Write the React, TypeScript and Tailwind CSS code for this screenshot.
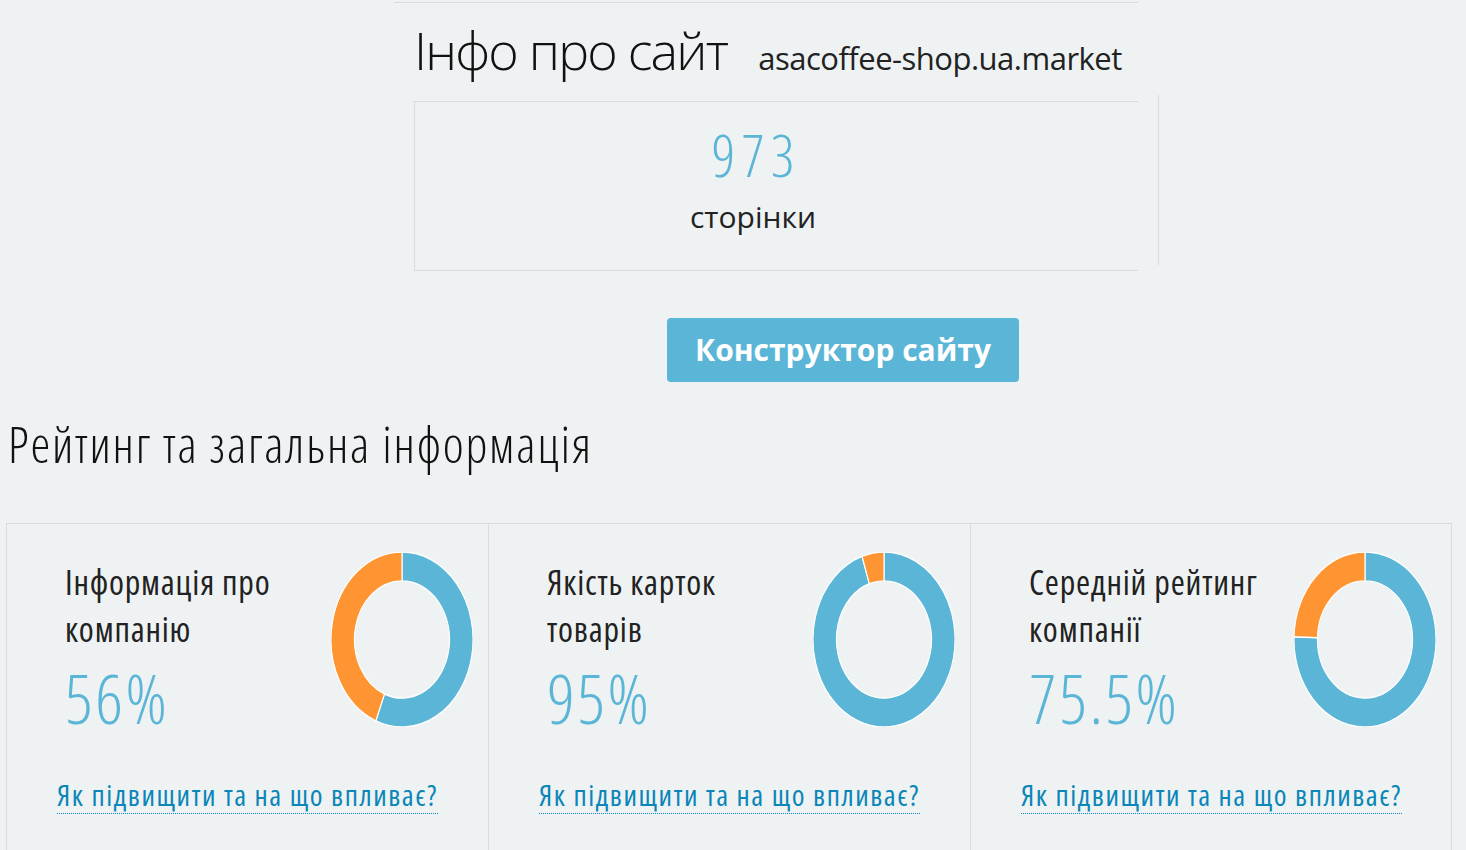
import React from "react";

const BLUE = "#5bb5d6";
const ORANGE = "#fe9532";

function arc(a0: number, a1: number, r0: number, r1: number) {
  // angles in degrees, 0 = 12 o'clock, clockwise
  const p = (a: number, r: number) => {
    const t = ((a - 90) * Math.PI) / 180;
    return `${50 + r * Math.cos(t)} ${50 + r * Math.sin(t)}`;
  };
  const large = a1 - a0 > 180 ? 1 : 0;
  return `M ${p(a0, r1)} A ${r1} ${r1} 0 ${large} 1 ${p(a1, r1)} L ${p(a1, r0)} A ${r0} ${r0} 0 ${large} 0 ${p(a0, r0)} Z`;
}

function Donut({ value }: { value: number }) {
  const end = (value / 100) * 360;
  return (
    <svg width="142" height="175" viewBox="0 0 100 100" preserveAspectRatio="none" className="shrink-0">
      <path d={arc(0, end, 33.5, 50)} fill={BLUE} stroke="#ffffff" strokeWidth="0.8" />
      <path d={arc(end, 360, 33.5, 50)} fill={ORANGE} stroke="#ffffff" strokeWidth="0.8" />
    </svg>
  );
}

const cards = [
  { title: ["Інформація про", "компанію"], value: "56%", pct: 56 },
  { title: ["Якість карток", "товарів"], value: "95%", pct: 95 },
  { title: ["Середній рейтинг", "компанії"], value: "75.5%", pct: 75.5 },
];

function RatingCard({ title, value, pct, last }: { title: string[]; value: string; pct: number; last?: boolean }) {
  return (
    <div className={`w-[482px] h-[340px] border-t border-l border-[#d8dcde] ${last ? "border-r" : ""} pt-[28px] pl-[50px] pr-[15px]`}>
      <div className="flex justify-between">
        <div className="pl-[8px] pt-[7px]">
          <div className="text-[34px] leading-[47px] tracking-[0.8px] text-[#222] font-stretch-condensed whitespace-nowrap">
            {title[0]}
            <br />
            {title[1]}
          </div>
          <div className="text-[68px] leading-[70px] tracking-[2.5px] font-light text-[#5bb5d6] mt-[10px] font-stretch-condensed">
            {value}
          </div>
        </div>
        <Donut value={pct} />
      </div>
      <a className="inline-block mt-[44px] text-[29px] leading-[36px] tracking-[1.55px] whitespace-nowrap text-[#0a86b8] font-stretch-condensed border-b border-dotted border-[#0a86b8]">
        Як підвищити та на що впливає?
      </a>
    </div>
  );
}

export default function App() {
  return (
    <div
      className="min-h-screen bg-[#eff2f3] overflow-hidden"
      style={{ fontFamily: '"Open Sans", "Noto Sans", sans-serif' }}
    >
      <div className="ml-[394px] mt-[2px] w-[744px] border-t border-[#d8dcde]" />
      <div className="ml-[414px] flex items-baseline gap-[31px] mt-[17px]">
        <h1 className="text-[52px] leading-[60px] tracking-[-1.8px] font-light text-[#111]">Інфо про сайт</h1>
        <span className="text-[31px] tracking-[-0.5px] text-[#222]">asacoffee-shop.ua.market</span>
      </div>
      <div className="ml-[414px] flex items-start mt-[19px]">
        <div className="w-[724px] h-[170px] border-t border-b border-l border-[#d8dcde] flex">
          <div className="w-[676px] text-center pt-[18px] pl-[6px]">
            <div className="text-[58px] leading-[70px] tracking-[6px] font-light text-[#5bb5d6] font-stretch-condensed">973</div>
            <div className="mt-[4px] -ml-[6px] text-[30px] leading-[46px] text-[#222]">сторінки</div>
          </div>
        </div>
        <div className="ml-[20px] -mt-[6px] w-px h-[170px] bg-[#d8dcde]" />
      </div>
      <button className="ml-[667px] mt-[47px] w-[352px] h-[64px] rounded-[4px] bg-[#5bb5d6] text-white text-[30px] font-bold">
        Конструктор сайту
      </button>
      <h2 className="ml-[8px] mt-[32px] text-[50px] leading-[60px] tracking-[1.8px] font-light text-[#111] font-stretch-condensed">
        Рейтинг та загальна інформація
      </h2>
      <div className="ml-[6px] mt-[49px] flex">
        {cards.map((c, i) => (
          <RatingCard key={i} {...c} last={i === cards.length - 1} />
        ))}
      </div>
    </div>
  );
}
